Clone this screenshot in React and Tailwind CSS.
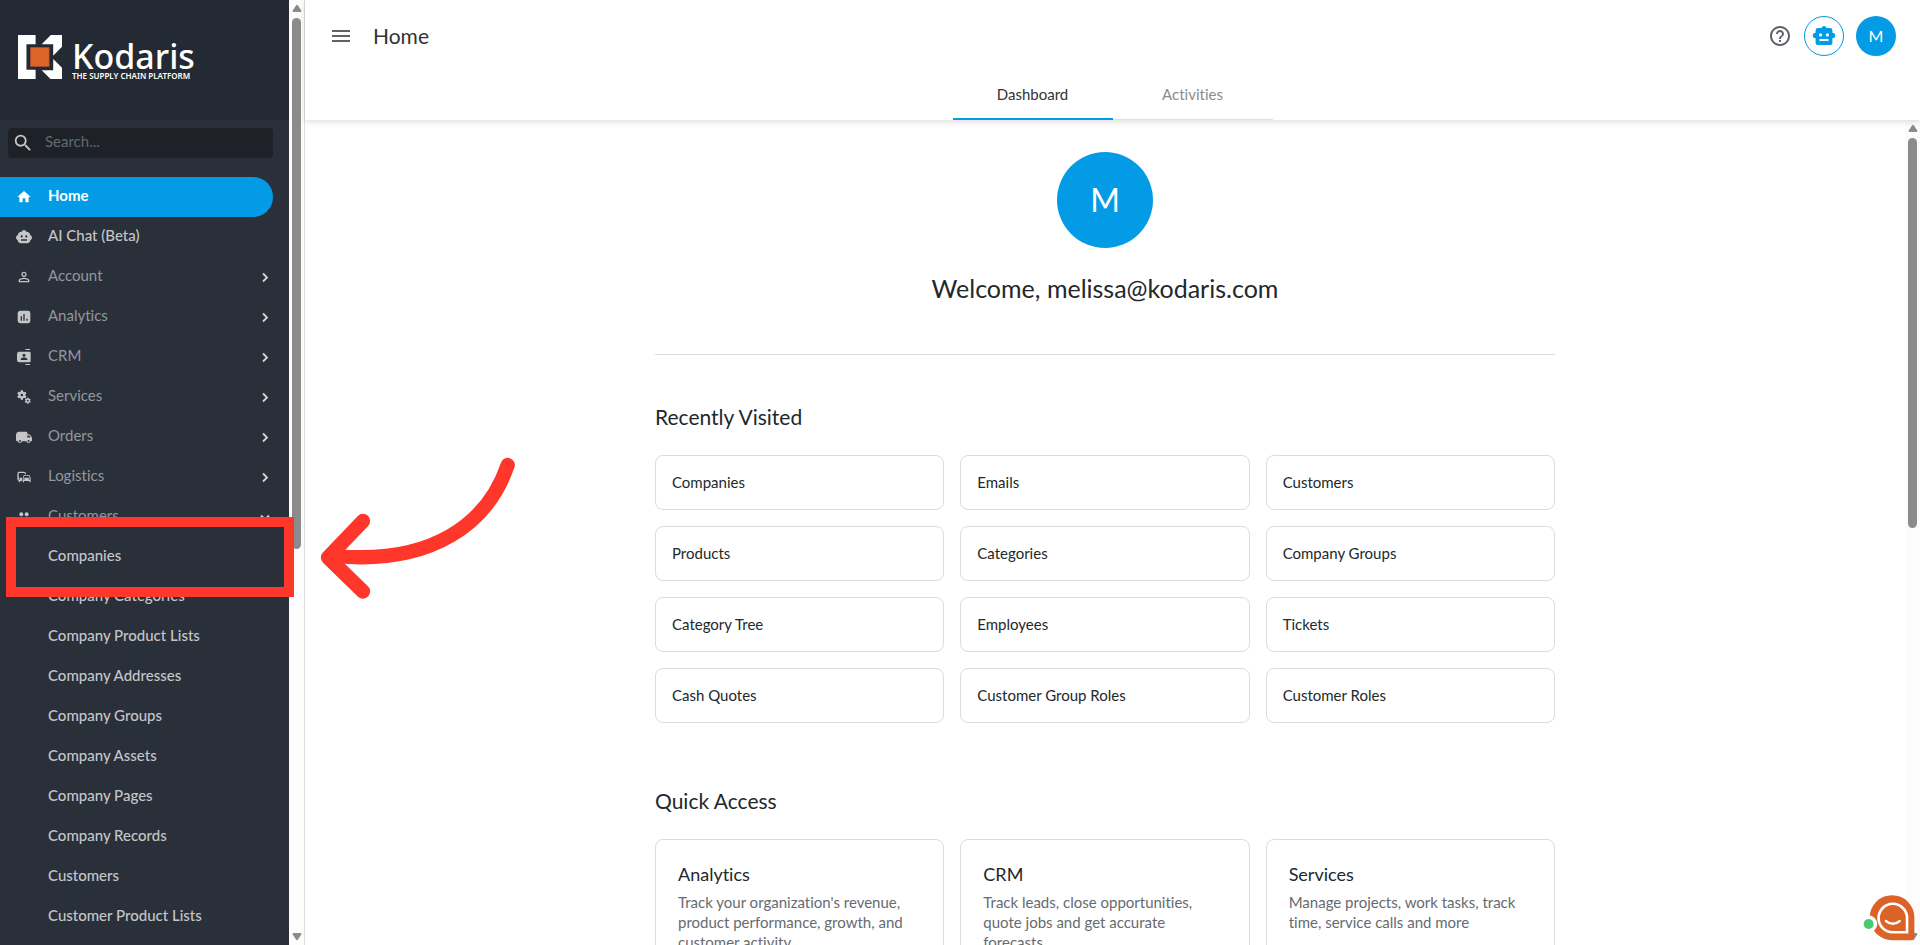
import React from "react";
import {
  MdCommute,
  MdHelpOutline,
  MdHome,
  MdMenu,
  MdMiscellaneousServices,
  MdPeople,
  MdPersonOutline,
  MdSearch,
} from "react-icons/md";

function RobotIcon({ className }) {
  return (
    <svg viewBox="0 0 24 24" className={className} fill="currentColor" aria-hidden="true">
      <path
        fillRule="evenodd"
        d="M12 2a2.6 2.6 0 0 1 2.5 2H18a2.4 2.4 0 0 1 2.4 2.4v2.3a2.8 2.8 0 0 1 0 5.6V19a2 2 0 0 1-2 2H5.6a2 2 0 0 1-2-2v-4.7a2.8 2.8 0 0 1 0-5.6V6.4A2.4 2.4 0 0 1 6 4h3.5A2.6 2.6 0 0 1 12 2zM8.6 9.3a1.6 1.6 0 1 0 0 3.2 1.6 1.6 0 0 0 0-3.2zm6.8 0a1.6 1.6 0 1 0 0 3.2 1.6 1.6 0 0 0 0-3.2zM7.5 15v2h9v-2z"
      />
    </svg>
  );
}

function ChatRobotIcon({ className }) {
  return (
    <svg viewBox="0 0 24 24" className={className} fill="currentColor" aria-hidden="true">
      <path
        fillRule="evenodd"
        d="M12 1.5q2.6 0 3.5 2.5 5.5.3 6 5.500 2.500.8 2.500 3.500t-2.500 3.500Q21 21.500 16 21.500H8Q3 21.500 2.500 16.500 0 15.700 0 13t2.500-3.500Q3 4.300 8.500 4 9.400 1.500 12 1.500zM8.500 9.500a1.600 1.600 0 1 0 0 3.200 1.600 1.600 0 0 0 0-3.200zm7 0a1.600 1.600 0 1 0 0 3.200 1.600 1.600 0 0 0 0-3.200zM7.500 15.500v2h9v-2z"
      />
    </svg>
  );
}

function AnalyticsIcon({ className }) {
  return (
    <svg viewBox="0 0 24 24" className={className} fill="currentColor" aria-hidden="true">
      <path
        fillRule="evenodd"
        d="M7 2.500h11a3.500 3.500 0 0 1 3.500 3.500v12a3.500 3.500 0 0 1-3.500 3.500H7A4.500 4.500 0 0 1 2.500 17V7A4.500 4.500 0 0 1 7 2.500zM7 11v6.500h2V11zm4-3.500v10h2v-10zm4.500 7v3h2v-3z"
      />
    </svg>
  );
}

function ContactsIcon({ className }) {
  return (
    <svg viewBox="0 0 24 24" className={className} fill="currentColor" aria-hidden="true">
      <path d="M14 0h7v1.500h-7zM14 22.500h7V24h-7z" />
      <path
        fillRule="evenodd"
        d="M5 4h15a2 2 0 0 1 2 2v12a2 2 0 0 1-2 2H5a3.500 3.500 0 0 1-3.500-3.500v-9A3.500 3.500 0 0 1 5 4zm7 3a2.300 2.300 0 1 0 0 4.600A2.300 2.300 0 0 0 12 7zm-5 9.500h10V15.500c0-1.700-3.300-2.600-5-2.600s-5 .9-5 2.600z"
      />
    </svg>
  );
}

function TruckIcon({ className }) {
  return (
    <svg viewBox="0 0 24 24" className={className} fill="currentColor" aria-hidden="true">
      <path
        fillRule="evenodd"
        d="M4 4h11.500a1.500 1.500 0 0 1 1.500 1.500V8h2.300a2 2 0 0 1 1.600.8L23.600 12.400q.4.500.4 1.200V17a1.500 1.500 0 0 1-1.500 1.500H22a3.200 3.200 0 0 1-6.300 0H9a3.200 3.200 0 0 1-6.300 0H2A2 2 0 0 1 0 16.500V9a5 5 0 0 1 4-5zM17 9.800v3h5L19.700 9.800zM5.850 16.500a1.500 1.500 0 1 0 0 3 1.500 1.500 0 0 0 0-3zm13 0a1.500 1.500 0 1 0 0 3 1.500 1.500 0 0 0 0-3z"
      />
    </svg>
  );
}

function Chevron({ open }) {
  return (
    <svg viewBox="0 0 16 16" className="h-4 w-4 text-[#d4d5d7]" fill="none" stroke="currentColor" strokeWidth="1.8" aria-hidden="true">
      <path d={open ? "M4 6.500l4 4 4-4" : "M6 4.500l4 4-4 4"} />
    </svg>
  );
}

function Logo() {
  return (
    <a href="#home" className="flex items-start gap-2.5 text-white" aria-label="Kodaris">
      <svg viewBox="0 0 130 130" className="mt-1 h-11 w-11 shrink-0" aria-hidden="true">
        <path fill="#fff" d="M0 0h52v27H25v76h27v27H0zM97 0h33v35l-26 26V27H70zM104 71l26 26v33H96l-26-26h34z" />
        <path fill="#dc6428" stroke="#b4552a" strokeWidth="2" d="M37 37h55v56H37z" />
      </svg>
      <span className="mt-2.5 flex flex-col font-['Noto_Sans',sans-serif]">
        <span className="text-[34px] leading-[31px] font-medium">Kodaris</span>
        <span className="text-[8px] leading-2 font-semibold whitespace-nowrap">THE SUPPLY CHAIN PLATFORM</span>
      </span>
    </a>
  );
}

const sections = [
  { label: "Account", Icon: MdPersonOutline },
  { label: "Analytics", Icon: AnalyticsIcon },
  { label: "CRM", Icon: ContactsIcon },
  { label: "Services", Icon: MdMiscellaneousServices },
  { label: "Orders", Icon: TruckIcon },
  { label: "Logistics", Icon: MdCommute },
  { label: "Customers", Icon: MdPeople, open: true },
];

const customerPages = [
  "Companies",
  "Company Categories",
  "Company Product Lists",
  "Company Addresses",
  "Company Groups",
  "Company Assets",
  "Company Pages",
  "Company Records",
  "Customers",
  "Customer Product Lists",
];

const visited = [
  "Companies", "Emails", "Customers",
  "Products", "Categories", "Company Groups",
  "Category Tree", "Employees", "Tickets",
  "Cash Quotes", "Customer Group Roles", "Customer Roles",
];

const quick = [
  { title: "Analytics", text: "Track your organization's revenue, product performance, growth, and customer activity" },
  { title: "CRM", text: "Track leads, close opportunities, quote jobs and get accurate forecasts" },
  { title: "Services", text: "Manage projects, work tasks, track time, service calls and more" },
];

function ScrollRail({ thumb }) {
  return (
    <div className="flex w-[15px] shrink-0 flex-col items-center bg-[#fcfcfc] py-1" aria-hidden="true">
      <svg viewBox="0 0 10 8" className="h-2 w-[10px] shrink-0 fill-[#8b8b8b]">
        <path d="M4 1.500Q5 .2 6 1.500L9.300 6.500Q9.500 8 8.500 8H1.500Q.5 8 .7 6.500z" />
      </svg>
      <div className="mt-1.5 min-h-0 w-full flex-1">
        <div className={`mx-auto w-[9px] rounded-full bg-[#8b8b8b] ${thumb}`} />
      </div>
      <svg viewBox="0 0 10 8" className="h-2 w-[10px] shrink-0 fill-[#8b8b8b]">
        <path d="M4 6.500Q5 7.800 6 6.500L9.300 1.500Q9.500 0 8.500 0H1.500Q.5 0 .7 1.500z" />
      </svg>
    </div>
  );
}

function Sidebar() {
  return (
    <div className="flex w-[305px] shrink-0 overflow-hidden border-r border-[#dcdcdc]">
      <div className="flex w-[289px] shrink-0 flex-col overflow-hidden bg-[#2a303a]">
        <div className="h-[120px] shrink-0 bg-[#242a33] px-[18px] pt-[31px]">
          <Logo />
        </div>
        <div className="px-2 pt-2 pr-4 pb-[19px]">
          <label className="flex h-[30px] items-center rounded bg-[#1e2228] pl-1">
            <MdSearch className="h-[22px] w-[22px] text-[#c4c6c8]" />
            <input
              type="text"
              aria-label="Search"
              placeholder="Search..."
              className="ml-[11px] min-w-0 flex-1 bg-transparent pb-1 text-[15px] leading-5 text-white outline-none placeholder:text-[#5e6a6e]"
            />
          </label>
        </div>
        <nav className="flex flex-col pr-4 text-[15px] leading-5">
          <a href="#home" className="flex h-10 shrink-0 items-center rounded-r-full bg-[#039be5] pl-4 font-bold text-white">
            <MdHome className="h-4 w-4" />
            <span className="ml-4 pb-1">Home</span>
          </a>
          <a href="#chat" className="flex h-10 shrink-0 items-center pl-4 font-medium text-[#c4c6c8]">
            <ChatRobotIcon className="h-4 w-4" />
            <span className="ml-4 pb-1">AI Chat (Beta)</span>
          </a>
          {sections.map(({ label, Icon, open }) => (
            <button key={label} type="button" aria-expanded={!!open} className="flex h-10 shrink-0 items-center pl-4 text-left text-[#94979c]">
              <Icon className="h-4 w-4 text-[#c4c6c8]" />
              <span className="ml-4 flex-1 pb-1">{label}</span>
              <Chevron open={open} />
            </button>
          ))}
          {customerPages.map((p) => (
            <a key={p} href="#page" className="flex h-10 shrink-0 items-center pb-1 pl-12 font-medium text-[#c4c6c8]">
              {p}
            </a>
          ))}
        </nav>
      </div>
      <ScrollRail thumb="h-[58%]" />
    </div>
  );
}

function Header() {
  return (
    <header className="relative z-10 flex h-[120px] shrink-0 flex-col bg-white shadow-[0_2px_6px_rgba(0,0,0,0.12)]">
      <div className="flex h-[72px] items-center px-6">
        <button type="button" aria-label="Menu" className="text-[#5f6368]">
          <MdMenu className="h-6 w-6" />
        </button>
        <h1 className="ml-5 flex-1 text-[21px] leading-7 text-[#333]">Home</h1>
        <button type="button" aria-label="Help" className="mr-3 text-[#5f6368]">
          <MdHelpOutline className="h-6 w-6" />
        </button>
        <button type="button" aria-label="Assistant" className="mr-3 flex h-10 w-10 items-center justify-center rounded-full border border-[#039be5] text-[#039be5]">
          <RobotIcon className="h-6 w-6" />
        </button>
        <button type="button" aria-label="Profile" className="flex h-10 w-10 items-center justify-center rounded-full bg-[#039be5] text-base leading-6 text-white">
          M
        </button>
      </div>
      <div role="tablist" className="flex h-12 justify-center text-[15px] leading-5">
        <button type="button" role="tab" aria-selected="true" className="w-40 border-b-2 border-[#039be5] pb-0.5 text-[#333]">
          Dashboard
        </button>
        <button type="button" role="tab" aria-selected="false" className="w-40 border-b border-[#e0e0e0] pb-1 text-[#8b8b8b]">
          Activities
        </button>
      </div>
    </header>
  );
}

function ChatWidget() {
  return (
    <button type="button" aria-label="Open chat" className="absolute right-1 bottom-0 z-20">
      <svg viewBox="0 0 160 150" className="h-[50px] w-[53px]" aria-hidden="true">
        <path fill="#db6328" d="M88 0a67 67 0 0 1 67 67v60q0 9-9 9H88A68 68 0 0 1 88 0z" />
        <path fill="none" stroke="#fff" strokeWidth="8" d="M90 26a43 43 0 0 1 43 43v43H90a43 43 0 0 1 0-86z" />
        <path fill="none" stroke="#fff" strokeWidth="7" strokeLinecap="round" d="M69 78q21 17 42 0" />
        <circle cx="17" cy="87" r="26" fill="#fff" />
        <circle cx="17" cy="87" r="15" fill="#4bc96e" />
      </svg>
    </button>
  );
}

function Dashboard() {
  return (
    <main className="flex min-h-0 flex-1">
      <div className="min-w-0 flex-1 overflow-hidden">
        <div className="mx-auto flex w-full max-w-[900px] flex-col pt-8 text-[#22282c]">
          <div className="mx-auto flex h-24 w-24 items-center justify-center rounded-full bg-[#039be5] text-[32px] leading-10 text-white">M</div>
          <h2 className="mt-6 border-b border-[#dcdcdc] pb-[50px] text-center text-[25px] leading-8">Welcome, melissa@kodaris.com</h2>
          <h3 className="mt-12 text-[21px] leading-7">Recently Visited</h3>
          <div className="mt-6 grid grid-cols-3 gap-4">
            {visited.map((v) => (
              <a key={v} href="#visited" className="flex h-[55px] items-center rounded-lg border border-[#dcdcdc] px-4 pb-0.5 text-[15px] leading-5">
                {v}
              </a>
            ))}
          </div>
          <h3 className="mt-16 text-[21px] leading-7">Quick Access</h3>
          <div className="mt-6 grid grid-cols-3 gap-4">
            {quick.map((q) => (
              <a key={q.title} href="#quick" className="flex flex-col gap-1.5 rounded-lg border border-[#dcdcdc] p-[22px]">
                <span className="text-lg leading-6">{q.title}</span>
                <span className="text-[15px] leading-5 text-[#666b70]">{q.text}</span>
              </a>
            ))}
          </div>
        </div>
      </div>
      <ScrollRail thumb="h-[49%]" />
    </main>
  );
}

function Annotation() {
  return (
    <div className="pointer-events-none absolute inset-0 z-30 overflow-hidden" aria-hidden="true">
      <div className="absolute top-[517px] left-[6px] h-20 w-[288px] border-[10px] border-[#ff372b]" />
      <svg viewBox="0 0 200 144" className="absolute top-[456px] left-[318px] h-36 w-[200px]" fill="none" stroke="#ff372b" strokeWidth="14.3" strokeLinecap="round" strokeLinejoin="round">
        <path d="M189.700 9C170 67 115 109 17 100" />
        <path d="M45 65L10 101.500L45 135.500" />
      </svg>
    </div>
  );
}

export default function App() {
  return (
    <div className="relative flex h-screen overflow-hidden bg-white font-['Lato',sans-serif] [font-variant-ligatures:none]">
      <Sidebar />
      <div className="flex min-w-0 flex-1 flex-col">
        <Header />
        <Dashboard />
      </div>
      <ChatWidget />
      <Annotation />
    </div>
  );
}
